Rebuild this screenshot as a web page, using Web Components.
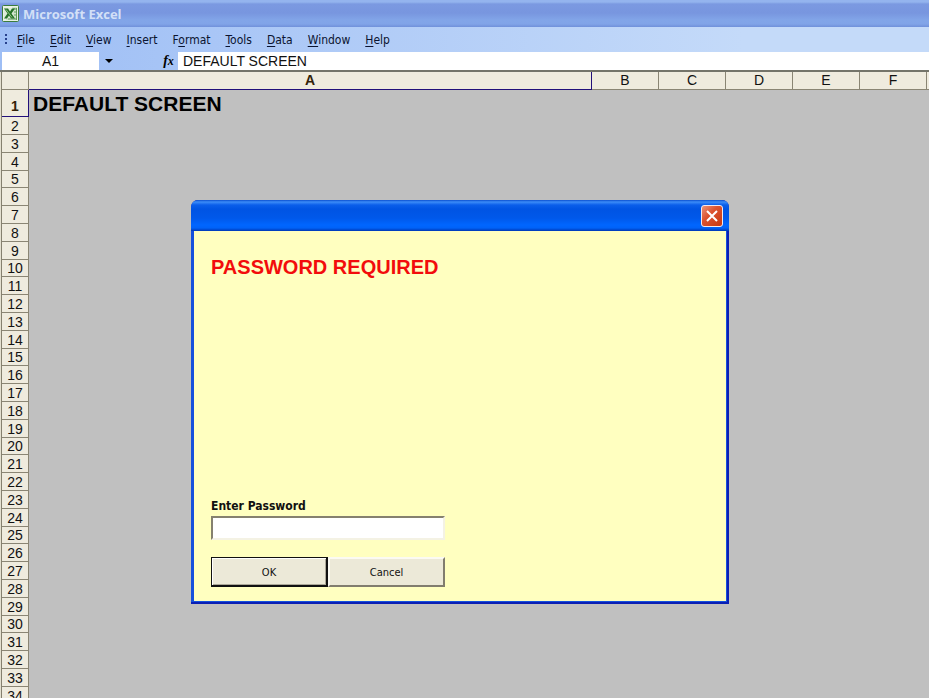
<!DOCTYPE html>
<html lang="en">
<head>
<meta charset="utf-8">
<title>Microsoft Excel</title>
<style>
    body {
        margin: 0;
        height: 100vh;
        overflow: hidden;
        background: #c0c0c0;
        font-family: "Liberation Sans", Arial, sans-serif;
        font-size: 14px;
        color: #111;
        --ui-font: "DejaVu Sans Condensed", "DejaVu Sans", Tahoma, sans-serif;
    }
</style>
</head>
<body>
<excel-app>
    <title-bar slot="top" text="Microsoft Excel"></title-bar>
    <menu-bar slot="top" items="File,0;Edit,0;View,0;Insert,0;Format,1;Tools,0;Data,0;Window,0;Help,0"></menu-bar>
    <formula-bar slot="top" cell="A1" value="DEFAULT SCREEN"></formula-bar>
    <sheet-grid rows="34" columns="B,C,D,E,F">DEFAULT SCREEN</sheet-grid>
    <password-dialog slot="dialog">PASSWORD REQUIRED</password-dialog>
</excel-app>

<script>
class ExcelApp extends HTMLElement {
    constructor() {
        super();
        this.shadow = this.attachShadow({ mode: 'open' });
    }

    connectedCallback() {
        this.shadow.innerHTML =
        `
        <style>
            :host {
                display: flex;
                flex-direction: column;
                position: relative;
                height: 100%;
                overflow: hidden;
            }
            header {
                background: linear-gradient(to right, #9ebef5, #c4daf9 80%);
            }
            main {
                flex: 1;
                min-height: 0;
                overflow: hidden;
            }
        </style>
        <header><slot name="top"></slot></header>
        <main><slot></slot></main>
        <slot name="dialog"></slot>
        `;
    }
}

class TitleBar extends HTMLElement {
    constructor() {
        super();
        this.shadow = this.attachShadow({ mode: 'open' });
    }

    connectedCallback() {
        this.shadow.innerHTML =
        `
        <style>
            :host {
                display: flex;
                align-items: center;
                gap: 4px;
                height: 27px;
                padding-left: 2px;
                background: linear-gradient(#94b4ee 0, #94b4ee 2px, #7b99e1 4px, #7896df 13px, #82a5e8 20px, #81a4e8 24px, #7090da 27px);
            }
            svg {
                display: block;
            }
            h1 {
                margin: 0;
                font: bold 13px/20px "Open Sans", "Trebuchet MS", sans-serif;
                color: #d3e0f7;
            }
        </style>
        <svg width="17" height="17" viewBox="0 0 17 17" aria-hidden="true">
            <rect x=".5" y=".5" width="16" height="16" rx="1" fill="#e9f3e5" stroke="#3c7c3c"/>
            <path d="M10 2h5v13H4v-2h6z" fill="#cfe3cb"/>
            <path d="M11 4h3M12 7h2M12 10h2M6 14h8M14.500 3v12" stroke="#5e9b5c"/>
            <path d="M2 3h9v10H2z" fill="#dcebd7"/>
            <path d="M2 3.500h4l2 3 2-3h3L9.500 8.500 13 13.500H9L7 10.500 5 13.500H2L5.500 8.500z" fill="#267329"/>
            <path d="M4 4.500l6 8" stroke="#8cbf80"/>
        </svg>
        <h1>${this.getAttribute('text')}</h1>
        `;
    }
}

class MenuBar extends HTMLElement {
    constructor() {
        super();
        this.shadow = this.attachShadow({ mode: 'open' });
    }

    connectedCallback() {
        // each item is "Label,index of the access key"
        const buttons = this.getAttribute('items').split(';').map(item => {
            const [label, key] = item.split(',');
            const i = Number(key);
            return `<button type="button">${label.slice(0, i)}<u>${label[i]}</u>${label.slice(i + 1)}</button>`;
        }).join('');

        this.shadow.innerHTML =
        `
        <style>
            :host {
                display: block;
            }
            nav {
                display: flex;
                align-items: center;
                height: 25px;
                padding-left: 5px;
            }
            svg {
                display: block;
            }
            button {
                border: 0;
                padding: 0 7px 0 8px;
                background: none;
                font: 12px/20px var(--ui-font);
                color: #0b1430;
            }
            u {
                text-underline-offset: 2px;
            }
        </style>
        <nav>
            <svg width="4" height="14" viewBox="0 0 4 14" aria-hidden="true">
                <path d="M0 1h2v2H0zM0 5h2v2H0zM0 9h2v2H0z" fill="#27418c"/>
            </svg>
            ${buttons}
        </nav>
        `;
    }
}

class FormulaBar extends HTMLElement {
    constructor() {
        super();
        this.shadow = this.attachShadow({ mode: 'open' });
    }

    connectedCallback() {
        this.shadow.innerHTML =
        `
        <style>
            :host {
                display: flex;
                align-items: stretch;
                height: 18px;
                padding: 0 0 0 2px;
            }
            input {
                box-sizing: border-box;
                min-width: 0;
                border: 0;
                outline: 0;
                border-radius: 0;
                background: #fff;
                font: inherit;
                color: inherit;
            }
            .name {
                width: 97px;
                padding: 0;
                text-align: center;
            }
            .value {
                flex: 1;
                padding: 0 5px;
            }
            button {
                border: 0;
                padding: 0;
                background: none;
                color: #000;
            }
            .drop {
                display: flex;
                align-items: center;
                justify-content: center;
                width: 20px;
                margin-right: 40px;
            }
            .fx {
                width: 19px;
                font: italic bold 14px/18px "Liberation Serif", serif;
            }
            .fx span {
                font-size: 12px;
            }
        </style>
        <input class="name" aria-label="Name Box" value="${this.getAttribute('cell')}">
        <button class="drop" type="button" aria-label="Open names">
            <svg width="8" height="4" viewBox="0 0 8 4"><path d="M0 0h8L4 4z"/></svg>
        </button>
        <button class="fx" type="button" aria-label="Insert Function">f<span>x</span></button>
        <input class="value" aria-label="Formula Bar" value="${this.getAttribute('value')}">
        `;
    }
}

class SheetGrid extends HTMLElement {
    constructor() {
        super();
        this.shadow = this.attachShadow({ mode: 'open' });
    }

    connectedCallback() {
        this.render();
    }

    render() {
        const columns = this.getAttribute('columns').split(',');
        const count = Number(this.getAttribute('rows'));
        const heads = columns.map(name => `<th scope="col">${name}</th>`).join('');
        let rows = '';
        for (let n = 2; n <= count; n++) {
            rows += `<tr><th scope="row">${n}</th><td colspan="${columns.length + 2}"></td></tr>`;
        }

        this.shadow.innerHTML =
        `
        <style>
            :host {
                display: block;
                padding-left: 1px;
                border-top: 2px solid #74746a;
                background: linear-gradient(to right, #e4e0d0 1px, transparent 1px);
            }
            table {
                table-layout: fixed;
                width: 100%;
                border-collapse: separate;
                border-spacing: 0;
                border-left: 1px solid #85806f;
            }
            .rows { width: 27px; }
            .letter { width: 67px; }
            .rest { width: 2px; }
            th, td {
                box-sizing: border-box;
                padding: 0;
                overflow: hidden;
            }
            th {
                border-right: 1px solid #8a8574;
                border-bottom: 1px solid #8a8574;
                background: #efebde;
                font-weight: normal;
            }
            thead th {
                height: 18px;
                line-height: 17px;
            }
            thead th:last-child {
                border-right: 0;
            }
            thead .active {
                border-right: 1px solid #22107a;
                border-bottom: 1px solid #22107a;
                font-weight: bold;
                color: #33230a;
            }
            tbody th {
                height: 18px;
                line-height: 16px;
            }
            /* the default row height is a little under 18px */
            tbody tr:nth-child(5n) th {
                height: 17px;
            }
            tbody tr:first-child th {
                height: 27px;
                padding-top: 6px;
                border-right-color: #22107a;
                border-bottom-color: #22107a;
                font-weight: bold;
                color: #33230a;
            }
            .cell {
                padding-left: 4px;
                font-size: 21px;
                font-weight: bold;
                line-height: 27px;
                vertical-align: top;
                color: #000;
            }
        </style>
        <table>
            <colgroup>
                <col class="rows"><col><col class="letter" span="${columns.length}"><col class="rest">
            </colgroup>
            <thead>
                <tr><th></th><th class="active" scope="col">A</th>${heads}<th></th></tr>
            </thead>
            <tbody>
                <tr><th scope="row">1</th><td class="cell" colspan="${columns.length + 2}"><slot></slot></td></tr>
                ${rows}
            </tbody>
        </table>
        `;
    }
}

class PasswordDialog extends HTMLElement {
    constructor() {
        super();
        this.shadow = this.attachShadow({ mode: 'open' });
    }

    connectedCallback() {
        this.render();
        this.shadow.querySelectorAll('.close, .cancel').forEach(button => {
            button.addEventListener('click', () => this.remove());
        });
    }

    render() {
        this.shadow.innerHTML =
        `
        <style>
            :host {
                box-sizing: border-box;
                display: flex;
                flex-direction: column;
                position: absolute;
                left: 191px;
                top: 200px;
                width: 538px;
                height: 404px;
                border-radius: 7px 7px 0 0;
                overflow: hidden;
                background: #0a1fb4;
            }
            .bar {
                display: flex;
                align-items: center;
                justify-content: flex-end;
                height: 31px;
                padding-right: 6px;
                background: linear-gradient(#0a4fd0 0, #3c8cf8 2px, #0a5eea 5px, #0054e3 9px, #0058ea 18px, #0066ff 25px, #0062f8 28px, #0038b4 31px);
            }
            .close {
                display: flex;
                align-items: center;
                justify-content: center;
                box-sizing: border-box;
                width: 22px;
                height: 22px;
                border: 1px solid #f4e9ee;
                border-radius: 3px;
                padding: 0;
                background: linear-gradient(135deg, #eb9379, #dc5330 40%, #c8380f);
            }
            form {
                flex: 1;
                display: flex;
                flex-direction: column;
                align-items: flex-start;
                box-sizing: border-box;
                margin: 0 2px 2px 0;
                border: solid #1550dc;
                border-width: 0 1px 1px 3px;
                padding: 24px 17px 14px;
                background: #ffffc0;
            }
            h2 {
                margin: 0 0 auto;
                font-size: 20px;
                line-height: 24px;
                color: #f20c0c;
            }
            label {
                font: bold 12px/20px var(--ui-font);
                color: #111;
            }
            input {
                box-sizing: border-box;
                width: 234px;
                height: 24px;
                margin-bottom: 17px;
                border: 2px solid;
                border-color: #85816f #f4f2e4 #f4f2e4 #85816f;
                outline: 0;
                background: #fff;
            }
            .buttons {
                display: flex;
            }
            .buttons button {
                box-sizing: border-box;
                width: 117px;
                height: 30px;
                border: 2px solid;
                border-color: #fbfaf2 #817d6e #817d6e #fbfaf2;
                padding: 1px 0 0;
                background: #ece9d8;
                font: 11px/20px var(--ui-font);
                color: #111;
            }
            .buttons .ok {
                border-width: 1px 2px 2px 1px;
                border-color: #111;
                padding-top: 2px;
                box-shadow: inset 1px 1px #fff, inset -1px -1px #aca899;
            }
        </style>
        <div class="bar">
            <button class="close" type="button" aria-label="Close">
                <svg width="14" height="14" viewBox="0 0 14 14">
                    <path d="M2 2l10 10M12 2L2 12" stroke="#fff" stroke-width="2"/>
                </svg>
            </button>
        </div>
        <form onsubmit="return false">
            <h2><slot></slot></h2>
            <label for="password">Enter Password</label>
            <input id="password" type="password">
            <div class="buttons">
                <button class="ok" type="submit">OK</button>
                <button class="cancel" type="button">Cancel</button>
            </div>
        </form>
        `;
    }
}

customElements.define('excel-app', ExcelApp);
customElements.define('title-bar', TitleBar);
customElements.define('menu-bar', MenuBar);
customElements.define('formula-bar', FormulaBar);
customElements.define('sheet-grid', SheetGrid);
customElements.define('password-dialog', PasswordDialog);
</script>
</body>
</html>
